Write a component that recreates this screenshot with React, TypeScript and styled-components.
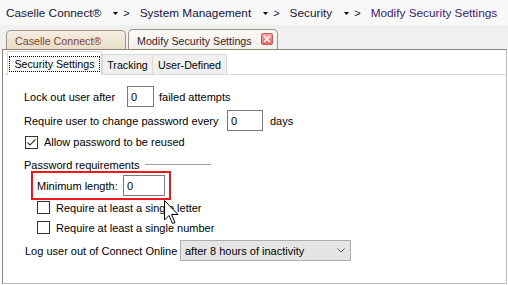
import React from 'react';
import styled, { createGlobalStyle } from 'styled-components';

const GlobalStyle = createGlobalStyle`
  html, body {
    margin: 0;
    padding: 0;
    background: #ffffff;
  }
  body {
    font-family: "Liberation Sans", Arial, sans-serif;
    color: #000;
  }
`;

const Window = styled.div`
  position: relative;
  width: 508px;
  height: 285px;
  display: flex;
  flex-direction: column;
  background: #ffffff;
  overflow: hidden;
`;

const Breadcrumb = styled.div`
  height: 25px;
  box-sizing: border-box;
  padding: 1px 0 0 6px;
  display: flex;
  align-items: center;
  background: #f8f8f8;
  font-size: 11.8px;
`;

const Crumb = styled.span<{ $current?: boolean }>`
  color: ${p => (p.$current ? '#3c1a78' : '#14143c')};
  white-space: nowrap;
`;

const Separator = styled.span`
  display: inline-flex;
  align-items: center;
  gap: 5px;
  margin: 0 10px 0 12px;
  color: #14143c;
  font-size: 11px;
`;

const TabStrip = styled.div`
  height: 24px;
  box-sizing: border-box;
  display: flex;
  align-items: flex-end;
  gap: 2px;
  padding-left: 6px;
  background: #f0f0f0;
`;

const DocTab = styled.div<{ $active?: boolean }>`
  box-sizing: border-box;
  width: ${p => (p.$active ? 150 : 120)}px;
  height: ${p => (p.$active ? 20 : 19)}px;
  display: flex;
  align-items: center;
  padding: 2px 0 0 8px;
  border: 1px solid #9c9288;
  border-bottom: none;
  border-radius: 5px 5px 0 0;
  background: ${p =>
    p.$active
      ? 'linear-gradient(#fbfaf8, #f1f0ec)'
      : 'linear-gradient(#f5eee2, #e9ddc8)'};
  color: ${p => (p.$active ? '#3a1c1c' : '#7a4636')};
  font-size: 10.7px;
  white-space: nowrap;
`;

const CloseButton = styled.span`
  box-sizing: border-box;
  width: 12px;
  height: 12px;
  margin-left: auto;
  margin-right: 4px;
  margin-top: -3px;
  display: flex;
  align-items: center;
  justify-content: center;
  border: 1px solid #c65a5a;
  border-radius: 2px;
  background: linear-gradient(#f6a4a4, #e46a6a);
`;

const Panel = styled.div`
  width: 505px;
  height: 235px;
  box-sizing: border-box;
  margin-left: 2px;
  display: flex;
  flex-direction: column;
  border-left: 1px solid #8f8377;
  border-top: 1px solid #8f8377;
  border-right: 1px solid #bdbdbd;
  border-bottom: 1px solid #bdbdbd;
  background: #ffffff;
`;

const InnerTabBar = styled.div`
  height: 24px;
  margin-top: 1px;
  display: flex;
  align-items: flex-end;
  font-size: 10.7px;
`;

const BarFill = styled.div<{ $grow?: boolean }>`
  width: 4px;
  flex: ${p => (p.$grow ? 1 : 'none')};
  height: 1px;
  background: #d9d9d9;
`;

const PageTab = styled.div<{ $selected?: boolean; $w: number; $noLeft?: boolean }>`
  box-sizing: border-box;
  width: ${p => p.$w}px;
  height: ${p => (p.$selected ? 24 : 21)}px;
  display: flex;
  align-items: center;
  justify-content: center;
  border: 1px solid #d9d9d9;
  border-left-width: ${p => (p.$noLeft ? 0 : 1)}px;
  border-bottom-width: ${p => (p.$selected ? 0 : 1)}px;
  background: ${p => (p.$selected ? '#ffffff' : '#f0f0f0')};
  white-space: nowrap;
`;

const FocusRing = styled.span`
  padding: 1px 4px;
  border: 1px dotted #000;
  line-height: 12px;
`;

const Form = styled.div`
  display: flex;
  flex-direction: column;
  padding: 11px 0 0 21px;
  font-size: 11px;
`;

const Row = styled.div<{ $mt?: number; $ml?: number; $h: number }>`
  display: flex;
  align-items: center;
  height: ${p => p.$h}px;
  margin-top: ${p => p.$mt ?? 0}px;
  margin-left: ${p => p.$ml ?? 0}px;
  white-space: nowrap;
`;

const Label = styled.span<{ $w?: number; $ml?: number }>`
  width: ${p => (p.$w ? `${p.$w}px` : 'auto')};
  margin-left: ${p => p.$ml ?? 0}px;
  flex: none;
`;

const TextBox = styled.div<{ $w: number }>`
  box-sizing: border-box;
  width: ${p => p.$w}px;
  height: 21px;
  display: flex;
  align-items: center;
  padding-left: 3px;
  border: 1px solid #7a7a7a;
  background: #ffffff;
  flex: none;
`;

const Check = styled.span<{ $ml?: number }>`
  box-sizing: border-box;
  width: 13px;
  height: 13px;
  margin-left: ${p => p.$ml ?? 0}px;
  margin-right: 6px;
  display: flex;
  align-items: center;
  justify-content: center;
  border: 1px solid #333333;
  background: #ffffff;
  flex: none;
`;

const GroupTitle = styled.div`
  display: flex;
  align-items: center;
  height: 13px;
  margin-top: 9px;
  white-space: nowrap;
`;

const GroupRule = styled.span`
  width: 66px;
  height: 1px;
  margin-left: 5px;
  background: #a0a0a0;
`;

const Highlight = styled.div`
  box-sizing: border-box;
  width: 140px;
  height: 29px;
  margin-left: 7px;
  display: flex;
  align-items: center;
  padding-left: 4px;
  border: 2px solid #f01820;
`;

const Select = styled.div`
  box-sizing: border-box;
  width: 171px;
  height: 21px;
  display: flex;
  align-items: center;
  padding: 0 5px 0 4px;
  border: 1px solid #adadad;
  background: #e5e5e5;
  flex: none;
`;

const SelectText = styled.span`
  flex: 1;
`;

const Cursor = styled.svg`
  position: absolute;
  left: 164px;
  top: 200px;
`;

function Caret() {
  return (
    <svg width="5" height="3" viewBox="0 0 5 3">
      <polygon points="0,0 5,0 2.5,3" fill="#000" />
    </svg>
  );
}

function CheckBox({ checked, ml }: { checked?: boolean; ml?: number }) {
  return (
    <Check $ml={ml}>
      {checked && (
        <svg width="11" height="11" viewBox="0 0 11 11">
          <polyline points="1.5,5.5 4,8 9.5,2.5" fill="none" stroke="#333" strokeWidth="1.1" />
        </svg>
      )}
    </Check>
  );
}

const crumbs = ['Caselle Connect®', 'System Management', 'Security', 'Modify Security Settings'];

export default function App() {
  return (
    <Window>
      <GlobalStyle />
      <Breadcrumb>
        {crumbs.map((c, i) => (
          <React.Fragment key={c}>
            <Crumb $current={i === crumbs.length - 1}>{c}</Crumb>
            {i < crumbs.length - 1 && (
              <Separator>
                <Caret />
                <span>&gt;</span>
              </Separator>
            )}
          </React.Fragment>
        ))}
      </Breadcrumb>

      <TabStrip>
        <DocTab>Caselle Connect®</DocTab>
        <DocTab $active>
          Modify Security Settings
          <CloseButton>
            <svg width="8" height="8" viewBox="0 0 8 8">
              <path d="M1 1 L7 7 M7 1 L1 7" stroke="#fff" strokeWidth="1.6" />
            </svg>
          </CloseButton>
        </DocTab>
      </TabStrip>

      <Panel>
        <InnerTabBar>
          <BarFill />
          <PageTab $selected $w={95}>
            <FocusRing>Security Settings</FocusRing>
          </PageTab>
          <PageTab $w={51}>Tracking</PageTab>
          <PageTab $w={74} $noLeft>User-Defined</PageTab>
          <BarFill $grow />
        </InnerTabBar>

        <Form>
          <Row $h={21}>
            <Label $w={103}>Lock out user after</Label>
            <TextBox $w={27}>0</TextBox>
            <Label $ml={5}>failed attempts</Label>
          </Row>
          <Row $h={21} $mt={3}>
            <Label $w={203}>Require user to change password every</Label>
            <TextBox $w={36}>0</TextBox>
            <Label $ml={7}>days</Label>
          </Row>
          <Row $h={14} $mt={4}>
            <CheckBox checked ml={1} />
            <Label>Allow password to be reused</Label>
          </Row>
          <GroupTitle>
            Password requirements
            <GroupRule />
          </GroupTitle>
          <Highlight>
            <Label $w={86}>Minimum length:</Label>
            <TextBox $w={42}>0</TextBox>
          </Highlight>
          <Row $h={13} $mt={1}>
            <CheckBox ml={13} />
            <Label>Require at least a single letter</Label>
          </Row>
          <Row $h={13} $mt={7}>
            <CheckBox ml={13} />
            <Label>Require at least a single number</Label>
          </Row>
          <Row $h={21} $mt={6}>
            <Label $w={155} $ml={1}>Log user out of Connect Online</Label>
            <Select>
              <SelectText>after 8 hours of inactivity</SelectText>
              <svg width="8" height="5" viewBox="0 0 8 5">
                <polyline points="0.5,0.5 4,4 7.5,0.5" fill="none" stroke="#555" strokeWidth="1" />
              </svg>
            </Select>
          </Row>
        </Form>
      </Panel>

      <Cursor width="16" height="26" viewBox="0 0 16 26">
        <polygon
          points="0.5,0.5 0.5,20 5,15.5 8.5,23.5 11,22.5 7.5,14.5 14,14.5"
          fill="#fff"
          stroke="#000"
          strokeWidth="1"
          strokeLinejoin="miter"
        />
      </Cursor>
    </Window>
  );
}
